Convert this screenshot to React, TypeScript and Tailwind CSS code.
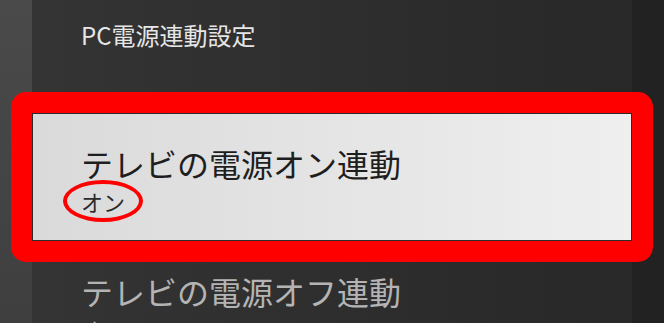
import React from "react";

const font = { fontFamily: '"Noto Sans CJK JP", "Noto Sans", sans-serif' };

export default function App() {
  return (
    <div className="relative w-[664px] h-[323px] overflow-hidden flex" style={font}>
      <div className="w-[32px] h-full bg-gradient-to-b from-[#4a4a4a] to-[#3f3f3f]" />
      <div className="w-[600px] h-full flex flex-col bg-gradient-to-r from-[#343434] to-[#282828]">
        <div className="h-[113px] shrink-0 pl-[49px] pt-[23px]">
          <div className="text-[24px] leading-none text-[#e6e6e6]">PC電源連動設定</div>
        </div>
        <div className="h-[128px] shrink-0 border border-[#2a2a2a] bg-gradient-to-r from-[#dadada] to-[#efefef] pl-[48px] pt-[33px]">
          <div className="text-[32px] leading-none text-[#1e1e1e]">テレビの電源オン連動</div>
          <div className="mt-[11px] text-[22px] leading-none text-[#2a2a2a]">オン</div>
        </div>
        <div className="pl-[49px] pt-[34px]">
          <div className="text-[32px] leading-none text-[#b4b4b4]">テレビの電源オフ連動</div>
          <div className="mt-[11px] text-[22px] leading-none text-[#b4b4b4]">オフ</div>
        </div>
      </div>
      <div className="flex-1 h-full bg-[#222222]" />

      <div className="absolute left-[11px] top-[92px] w-[642px] h-[170px] rounded-[15px] border-[21px] border-[#ff0000] pointer-events-none" />
      <div className="absolute left-[63px] top-[180px] w-[80px] h-[42px] rounded-[50%] border-[4px] border-[#ff0000] pointer-events-none" />
    </div>
  );
}
